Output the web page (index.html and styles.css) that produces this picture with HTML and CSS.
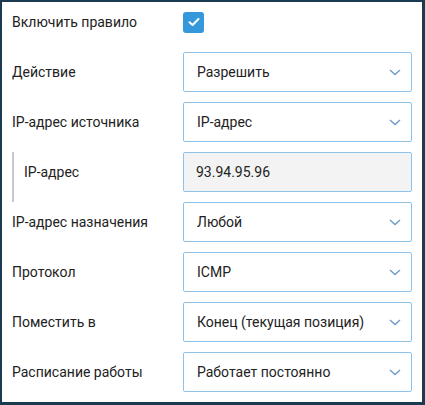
FILE: index.html
```html
<!DOCTYPE html>
<html lang="ru">
<head>
<meta charset="utf-8">
<link rel="stylesheet" href="styles.css">
</head>
<body>
<div class="frame">
  <form class="form">
    <div class="row">
      <div class="label">Включить правило</div>
      <div class="control">
        <span class="checkbox">
          <svg width="12" height="10" viewBox="0 0 12 10"><path d="M1.5 5.2 L4.6 8 L10.5 2" fill="none" stroke="#fff" stroke-width="2" stroke-linecap="round" stroke-linejoin="round"/></svg>
        </span>
      </div>
    </div>
    <div class="row">
      <div class="label">Действие</div>
      <div class="select"><span>Разрешить</span><svg class="chev" width="12" height="7" viewBox="0 0 12 7"><path d="M1 1 L6 5.5 L11 1" fill="none" stroke="#6e9cc6" stroke-width="1.4"/></svg></div>
    </div>
    <div class="row">
      <div class="label">IP-адрес источника</div>
      <div class="select"><span>IP-адрес</span><svg class="chev" width="12" height="7" viewBox="0 0 12 7"><path d="M1 1 L6 5.5 L11 1" fill="none" stroke="#6e9cc6" stroke-width="1.4"/></svg></div>
    </div>
    <div class="row">
      <div class="label sub">IP-адрес</div>
      <div class="input">93.94.95.96</div>
    </div>
    <div class="row">
      <div class="label">IP-адрес назначения</div>
      <div class="select"><span>Любой</span><svg class="chev" width="12" height="7" viewBox="0 0 12 7"><path d="M1 1 L6 5.5 L11 1" fill="none" stroke="#6e9cc6" stroke-width="1.4"/></svg></div>
    </div>
    <div class="row">
      <div class="label">Протокол</div>
      <div class="select"><span>ICMP</span><svg class="chev" width="12" height="7" viewBox="0 0 12 7"><path d="M1 1 L6 5.5 L11 1" fill="none" stroke="#6e9cc6" stroke-width="1.4"/></svg></div>
    </div>
    <div class="row">
      <div class="label">Поместить в</div>
      <div class="select"><span>Конец (текущая позиция)</span><svg class="chev" width="12" height="7" viewBox="0 0 12 7"><path d="M1 1 L6 5.5 L11 1" fill="none" stroke="#6e9cc6" stroke-width="1.4"/></svg></div>
    </div>
    <div class="row">
      <div class="label">Расписание работы</div>
      <div class="select"><span>Работает постоянно</span><svg class="chev" width="12" height="7" viewBox="0 0 12 7"><path d="M1 1 L6 5.5 L11 1" fill="none" stroke="#6e9cc6" stroke-width="1.4"/></svg></div>
    </div>
  </form>
</div>
</body>
</html>
```
FILE: styles.css
```css
html, body {
  margin: 0;
  padding: 0;
  background: #fff;
}
body {
  font-family: Roboto, "Liberation Sans", sans-serif;
  font-size: 14px;
  color: #222;
}
.frame {
  width: 425px;
  height: 405px;
  box-sizing: border-box;
  border-style: solid;
  border-color: #1b3a50;
  border-width: 2px 3px 3px 2px;
  background: #fff;
}
.form {
  display: flex;
  flex-direction: column;
  gap: 10px;
  padding: 0 10px 10px 10px;
}
.row {
  display: grid;
  grid-template-columns: 171px 1fr;
  grid-template-rows: 40px;
  height: 40px;
  align-items: center;
}
.label {
  height: 40px;
  display: flex;
  align-items: center;
}
.label.sub {
  align-self: start;
  height: 50px;
  box-sizing: border-box;
  border-left: 2px solid #c9c9c9;
  padding: 0 0 10px 10px;
}
.control {
  display: flex;
  align-items: center;
}
.checkbox {
  width: 21px;
  height: 21px;
  border-radius: 3px;
  background: #3498db;
  display: flex;
  align-items: center;
  justify-content: center;
}
.select, .input {
  height: 40px;
  box-sizing: border-box;
  border: 1px solid #8dc3ea;
  border-radius: 2px;
  display: flex;
  align-items: center;
}
.select {
  padding: 0 10px 0 13px;
  justify-content: space-between;
}
.input {
  padding: 0 12px;
  background: #f3f3f3;
}
.chev {
  display: block;
}
```
